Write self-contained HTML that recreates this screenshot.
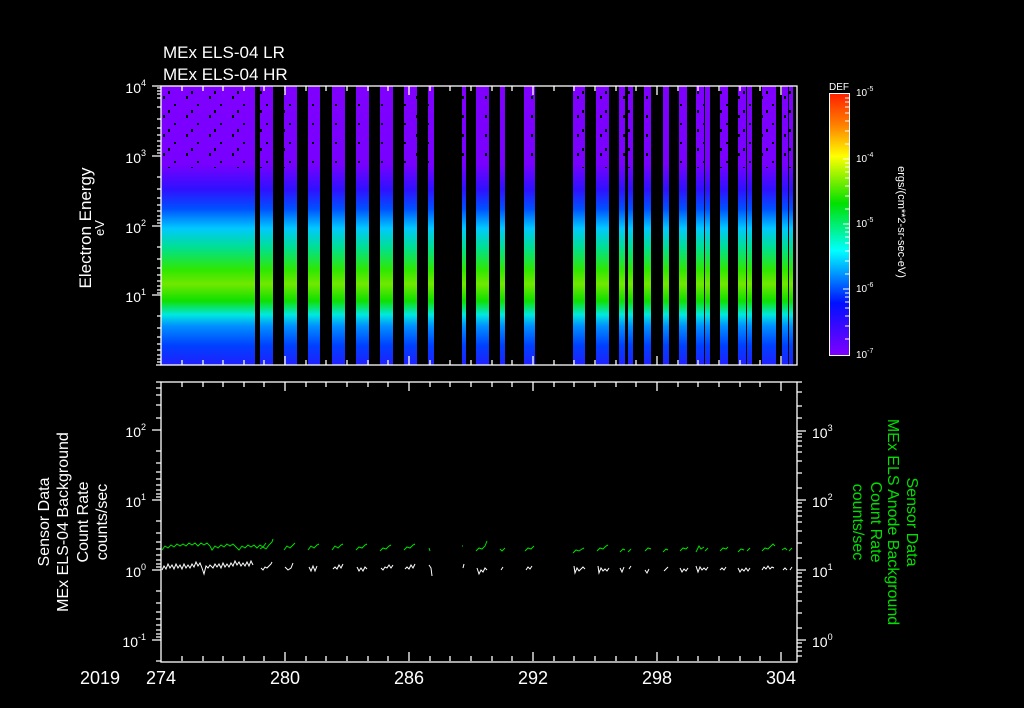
<!DOCTYPE html>
<html><head><meta charset="utf-8"><style>
html,body{margin:0;padding:0;background:#000;}
svg{display:block;}
text{font-family:"Liberation Sans",sans-serif;fill:#fff;}
</style></head><body>
<svg width="1024" height="708" viewBox="0 0 1024 708" xmlns="http://www.w3.org/2000/svg">
<defs>
<linearGradient id="sp" gradientUnits="userSpaceOnUse" x1="0" y1="86" x2="0" y2="365">
<stop offset="0" stop-color="#8000ff"/>
<stop offset="0.28" stop-color="#7800ff"/>
<stop offset="0.37" stop-color="#3010ff"/>
<stop offset="0.44" stop-color="#0050ff"/>
<stop offset="0.51" stop-color="#00c8ff"/>
<stop offset="0.58" stop-color="#00e090"/>
<stop offset="0.66" stop-color="#30e800"/>
<stop offset="0.71" stop-color="#70e800"/>
<stop offset="0.77" stop-color="#10e000"/>
<stop offset="0.82" stop-color="#00e8e0"/>
<stop offset="0.86" stop-color="#0090ff"/>
<stop offset="0.93" stop-color="#0040ff"/>
<stop offset="1" stop-color="#2020ff"/>
</linearGradient>
<linearGradient id="cb" x1="0" y1="0" x2="0" y2="1">
<stop offset="0" stop-color="#ff2000"/>
<stop offset="0.12" stop-color="#ff8000"/>
<stop offset="0.24" stop-color="#ffff00"/>
<stop offset="0.42" stop-color="#00e000"/>
<stop offset="0.6" stop-color="#00ffff"/>
<stop offset="0.8" stop-color="#0010ff"/>
<stop offset="1" stop-color="#8000ff"/>
</linearGradient>
<pattern id="spk" width="23" height="19" patternUnits="userSpaceOnUse">
<rect x="2" y="1" width="2" height="3" fill="#000"/>
<rect x="13" y="9" width="2" height="2" fill="#000"/>
<rect x="7" y="15" width="2" height="3" fill="#000"/>
</pattern>
</defs>
<text x="163" y="58" font-size="17">MEx ELS-04 LR</text>
<text x="163" y="80" font-size="17">MEx ELS-04 HR</text>
<g fill="url(#sp)">
<rect x="161" y="86" width="94" height="279"/>
<rect x="260" y="86" width="13" height="279"/>
<rect x="284" y="86" width="13" height="279"/>
<rect x="308" y="86" width="12" height="279"/>
<rect x="332" y="86" width="13" height="279"/>
<rect x="356" y="86" width="13" height="279"/>
<rect x="380" y="86" width="13" height="279"/>
<rect x="404" y="86" width="13" height="279"/>
<rect x="428" y="86" width="6" height="279"/>
<rect x="462" y="86" width="4" height="279"/>
<rect x="476" y="86" width="13" height="279"/>
<rect x="500" y="86" width="5" height="279"/>
<rect x="524" y="86" width="11" height="279"/>
<rect x="573" y="86" width="12" height="279"/>
<rect x="596" y="86" width="13" height="279"/>
<rect x="619" y="86" width="6" height="279"/>
<rect x="628" y="86" width="5" height="279"/>
<rect x="644" y="86" width="7" height="279"/>
<rect x="663" y="86" width="6" height="279"/>
<rect x="679" y="86" width="8" height="279"/>
<rect x="696" y="86" width="8" height="279"/>
<rect x="705" y="86" width="5" height="279"/>
<rect x="720" y="86" width="8" height="279"/>
<rect x="738" y="86" width="8" height="279"/>
<rect x="747" y="86" width="5" height="279"/>
<rect x="762" y="86" width="14" height="279"/>
<rect x="782" y="86" width="6" height="279"/>
<rect x="789" y="86" width="4" height="279"/>
</g>
<rect x="161" y="88" width="636" height="80" fill="url(#spk)"/>
<g stroke="#fff" stroke-width="1.3" fill="none">
<rect x="161" y="86" width="636" height="279"/>
<path d="M161 86h-9M161 156h-9M161 226h-9M161 295h-9M161 365h-5
M161 107h-4M161 119h-4M161 128h-4M161 135h-4M161 141h-4M161 146h-4M161 150h-4M161 153h-4
M161 177h-4M161 189h-4M161 198h-4M161 205h-4M161 211h-4M161 216h-4M161 220h-4M161 223h-4
M161 247h-4M161 259h-4M161 268h-4M161 275h-4M161 281h-4M161 286h-4M161 290h-4M161 293h-4
M161 316h-4M161 328h-4M161 337h-4M161 344h-4M161 350h-4M161 355h-4M161 359h-4M161 362h-4
M161 88h-4M161 91h-4M161 94h-4M161 98h-4"/>
</g>
<g stroke="#fff" stroke-width="1.3" id="xt">
<path d="M182 86v5M203 86v5M223 86v5M244 86v5M264 86v5M285 86v9M306 86v5M326 86v5M347 86v5M368 86v5M388 86v5M409 86v9M430 86v5M450 86v5M471 86v5M492 86v5M512 86v5M533 86v9M554 86v5M574 86v5M595 86v5M616 86v5M636 86v5M657 86v9M678 86v5M698 86v5M719 86v5M740 86v5M760 86v5M781 86v9
M182 365v-5M203 365v-5M223 365v-5M244 365v-5M264 365v-5M285 365v-9M306 365v-5M326 365v-5M347 365v-5M368 365v-5M388 365v-5M409 365v-9M430 365v-5M450 365v-5M471 365v-5M492 365v-5M512 365v-5M533 365v-9M554 365v-5M574 365v-5M595 365v-5M616 365v-5M636 365v-5M657 365v-9M678 365v-5M698 365v-5M719 365v-5M740 365v-5M760 365v-5M781 365v-9"/>
</g>
<g font-size="14" text-anchor="end">
<text x="146" y="93">10<tspan font-size="9" dy="-7">4</tspan></text>
<text x="146" y="163">10<tspan font-size="9" dy="-7">3</tspan></text>
<text x="146" y="233">10<tspan font-size="9" dy="-7">2</tspan></text>
<text x="146" y="302">10<tspan font-size="9" dy="-7">1</tspan></text>
</g>
<text transform="translate(91,228) rotate(-90)" font-size="17" text-anchor="middle">Electron Energy</text>
<text transform="translate(104,228) rotate(-90)" font-size="13" text-anchor="middle">eV</text>
<text x="829" y="90" font-size="10">DEF</text>
<rect x="829.5" y="93.5" width="20" height="262" fill="url(#cb)" stroke="#fff"/>
<g stroke="#fff" stroke-width="1"><path d="M849 159h-6M849 224h-6M849 289h-6M849 98h-4M849 102h-4M849 107h-4M849 113h-4M849 121h-4M849 131h-4M849 144h-4M849 163h-4M849 167h-4M849 172h-4M849 178h-4M849 186h-4M849 196h-4M849 209h-4M849 228h-4M849 232h-4M849 237h-4M849 243h-4M849 251h-4M849 261h-4M849 274h-4M849 293h-4M849 297h-4M849 302h-4M849 308h-4M849 316h-4M849 326h-4M849 339h-4"/></g>
<g font-size="10">
<text x="856" y="96">10<tspan font-size="7" dy="-5">-5</tspan></text>
<text x="856" y="162">10<tspan font-size="7" dy="-5">-4</tspan></text>
<text x="856" y="227">10<tspan font-size="7" dy="-5">-5</tspan></text>
<text x="856" y="292">10<tspan font-size="7" dy="-5">-6</tspan></text>
<text x="856" y="358">10<tspan font-size="7" dy="-5">-7</tspan></text>
</g>
<text transform="translate(898,222) rotate(90)" font-size="11" text-anchor="middle">ergs/(cm**2-sr-sec-eV)</text>
<g stroke="#fff" stroke-width="1.3" fill="none">
<rect x="161" y="382" width="636" height="280"/>
<path d="M161 430h-9M161 500h-9M161 570h-9M161 640h-9
M161 382h-5M161 388h-5M161 395h-5M161 405h-5M161 418h-5M161 451h-5M161 463h-5M161 472h-5M161 479h-5M161 485h-5M161 490h-5M161 494h-5M161 497h-5M161 521h-5M161 533h-5M161 542h-5M161 549h-5M161 555h-5M161 560h-5M161 564h-5M161 567h-5M161 591h-5M161 603h-5M161 612h-5M161 619h-5M161 625h-5M161 630h-5M161 634h-5M161 637h-5M161 661h-5
M797 431h9M797 500h9M797 570h9M797 640h9
M797 382h5M797 392h5M797 406h5M797 418h5M797 434h5M797 437h5M797 441h5M797 446h5M797 452h5M797 461h5M797 473h5M797 488h5M797 503h5M797 507h5M797 511h5M797 516h5M797 522h5M797 531h5M797 543h5M797 558h5M797 573h5M797 577h5M797 581h5M797 586h5M797 592h5M797 601h5M797 613h5M797 628h5M797 643h5M797 647h5M797 651h5M797 656h5"/>
</g>
<use href="#xt" transform="translate(0,296)"/>
<g font-size="14" text-anchor="end">
<text x="146" y="437">10<tspan font-size="9" dy="-7">2</tspan></text>
<text x="146" y="507">10<tspan font-size="9" dy="-7">1</tspan></text>
<text x="146" y="577">10<tspan font-size="9" dy="-7">0</tspan></text>
<text x="146" y="647">10<tspan font-size="9" dy="-7">-1</tspan></text>
</g>
<g font-size="14">
<text x="812" y="438">10<tspan font-size="9" dy="-7">3</tspan></text>
<text x="812" y="507">10<tspan font-size="9" dy="-7">2</tspan></text>
<text x="812" y="577">10<tspan font-size="9" dy="-7">1</tspan></text>
<text x="812" y="647">10<tspan font-size="9" dy="-7">0</tspan></text>
</g>
<g font-size="16" text-anchor="middle">
<text transform="translate(49,522) rotate(-90)">Sensor Data</text>
<text transform="translate(68,522) rotate(-90)">MEx ELS-04 Background</text>
<text transform="translate(88,522) rotate(-90)">Count Rate</text>
<text transform="translate(107,522) rotate(-90)">counts/sec</text>
</g>
<g font-size="16" text-anchor="middle">
<text transform="translate(907,522) rotate(90)" style="fill:#00e000">Sensor Data</text>
<text transform="translate(888,522) rotate(90)" style="fill:#00e000">MEx ELS Anode Background</text>
<text transform="translate(871,522) rotate(90)" style="fill:#00e000">Count Rate</text>
<text transform="translate(853,522) rotate(90)" style="fill:#00e000">counts/sec</text>
</g>
<g fill="none" stroke="#00e000" stroke-width="1">
<path d="M162 550l3-4 3 2 3-3 3 2 3-3 3 2 3-2 3 2 3-3 3 2 3-2 3 3 3-3 3 2 3-2 3 3 2 4 3-4 3 2 3-3 3 2 3-3 3 2 3-2 3 3 3 3 3-4 3 2 3-3 3 2 3-2 3 3 3-3 3 2 3-4"/>
<path d="M260 549l3-2 3 2 3-4 3-3 1-3"/>
<path d="M284 550l3-4 3 2 3-3 2-2"/><path d="M308 550l3-4 3 2 3-3 2-1"/><path d="M332 550l3-4 3 2 3-3 2-1"/><path d="M356 550l3-3 3 1 3-3 2-1"/><path d="M380 551l3-3 3 1 3-3 2-1"/><path d="M404 550l3-3 3 1 3-3 2-1"/><path d="M429 548l1 3"/><path d="M462 546h1"/>
<path d="M476 551l3-3 3 1 3-3 2-5"/><path d="M500 549l2 2 3-3"/><path d="M525 551l3-3 3 1 3-3"/>
<path d="M573 553l3-3 3 1 3-2 2-1"/><path d="M597 551l3-3 3 1 3-3 2-1"/><path d="M620 552l3-3 2 1M628 552l3-3"/><path d="M645 551l3-3 3 1"/><path d="M663 552l3-3 2 1"/><path d="M680 551l3-3 3 1 2-2"/><path d="M696 552l3-6 2 3 3-2M705 551l3-3"/><path d="M720 551l3-3 3 1 2-2"/><path d="M738 552l3-3 3 1M747 551l3-3"/><path d="M762 551l3-3 3 1 3-3 2-2 2 2"/><path d="M782 550l3-2 2 2M789 551l3-3"/>
</g>
<g fill="none" stroke="#fff" stroke-width="1">
<path d="M162 570l2-4 2 3 2-5 2 4 2-3 2 4 2-5 2 4 2-3 2 4 2-5 2 4 2-3 2 3 2-4 2 3 2-5 2 4 2-3 2 5 2 6 2-8 2 2 2-3 3 3 2-4 2 3 2-3 2 4 2-5 2 4 2-3 2 3 2-4 2 3 2-5 2 4 2-3 2 4 2-3 2 3 2-4 2 4 2-5 2 4"/>
<path d="M261 568l2 2 2-3 2 1 2-2 2-2 1-2"/><path d="M285 567l3 3 3-2 2-5"/><path d="M309 567l2 4 2-5 2 5 2-5"/><path d="M333 569l2-2 2 2 2-4 2 3 2-4"/><path d="M357 567l2 4 2-3 2 3 2-4 2 2"/><path d="M381 568l2 2 2-3 2 1 2-3 2 3 2-3"/><path d="M405 569l2-2 2 2 2-4 2 3 2-4"/><path d="M429 565l2 3 1 8"/><path d="M463 568l1-4"/><path d="M477 568l2 6 2-4 2 2 2-4 2 2"/><path d="M501 570l2-3"/><path d="M526 570l2-3 2 2 2-3"/><path d="M574 566l1 7 2-5 2 3 2-2 2-2 2 2"/><path d="M598 566l1 7 2-5 2 3 2-2 2 2 2-3"/><path d="M620 568l2 4 2-5M629 569l2-3"/><path d="M645 570l2 3 2-4"/><path d="M664 571l2-2 2-2"/><path d="M680 568l2 4 2-3 2 2 2-3"/><path d="M696 566l2 6 2-5 2 3 2-2 2 2 2-3"/><path d="M720 570l2-2 2 2 2-3"/><path d="M738 568l2 4 2-3 2 2 2-3 2 3 2-3"/><path d="M762 570l2-3 2 2 2-3 2 3 2-2 2 1"/><path d="M783 570l2-2 2 2M790 570l2-3"/>
</g>
<g font-size="18" text-anchor="middle">
<text x="100" y="684">2019</text>
<text x="161" y="684">274</text>
<text x="285" y="684">280</text>
<text x="409" y="684">286</text>
<text x="533" y="684">292</text>
<text x="657" y="684">298</text>
<text x="781" y="684">304</text>
</g>
</svg>
</body></html>
